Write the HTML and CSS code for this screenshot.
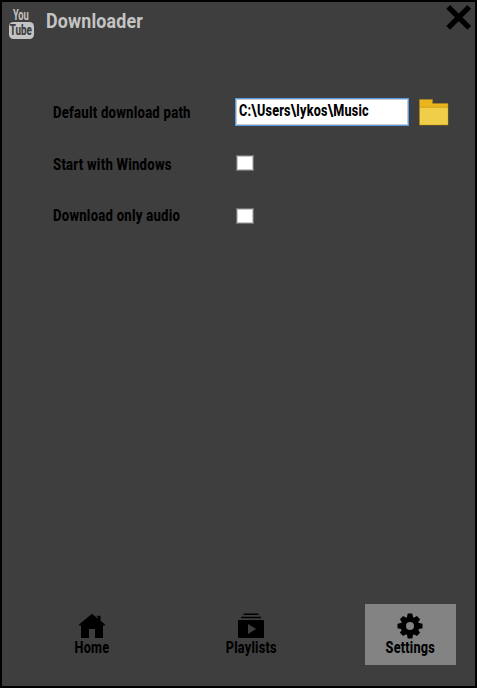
FILE: index.html
```html
<!DOCTYPE html>
<html lang="en">
<head>
<meta charset="utf-8">
<title>Downloader</title>
<link rel="stylesheet" href="styles.css">
</head>
<body>
<div class="window">
  <header class="titlebar">
    <div class="logo"><span class="logo-you"><span class="squeeze">You</span></span><span class="logo-tube"><span class="squeeze">Tube</span></span></div>
    <h1 class="title">Downloader</h1>
    <svg class="close" width="26" height="26" viewBox="0 0 26 26"><path d="M2.2 1.9L23.2 22.9M23.2 1.9L2.2 22.9" stroke="#000" stroke-width="5.4"/></svg>
  </header>
  <main class="settings">
    <div class="row">
      <span class="label"><span class="text">Default download path</span></span>
      <div class="path"><span class="text">C:\Users\lykos\Music</span></div>
      <svg class="folder" width="30" height="27" viewBox="0 0 30 27">
        <path d="M.5 .5H13.5V4.5H29V26H.5Z" fill="#ebb51c" stroke="#b58d1c" stroke-width=".5"/>
        <path d="M1 8.5H28.7V25.5H1Z" fill="#efce4a"/><path d="M1 8.2H28.7" stroke="#c79a1d" stroke-width=".7"/>
      </svg>
    </div>
    <div class="row">
      <span class="label"><span class="text">Start with Windows</span></span>
      <span class="check"></span>
    </div>
    <div class="row last">
      <span class="label"><span class="text">Download only audio</span></span>
      <span class="check"></span>
    </div>
  </main>
  <nav class="nav">
    <div class="tab">
      <svg width="28" height="26" viewBox="0 0 28 26"><path d="M14 .8L19.8 5.6V3.8H18.8V2.8H22.5V7.8L27 11.4V12.4H25V25H17V16H11V25H3V12.4H1V11.4Z"/></svg>
      <span class="text">Home</span>
    </div>
    <div class="tab">
      <svg width="28" height="26" viewBox="0 0 28 26"><path d="M6.5 .5H21.5V2H6.5ZM4 3.8H24V5.3H4Z"/><path fill-rule="evenodd" d="M2 7H26Q27 7 27 8V24Q27 25 26 25H2Q1 25 1 24V8Q1 7 2 7ZM11 11V21L19 16Z"/></svg>
      <span class="text">Playlists</span>
    </div>
    <div class="tab active">
      <svg width="26" height="26" viewBox="-13 -13 26 26">
        <path d="M-3.2-8L-2.3-12.5H2.3L3.2-8V8L2.3 12.5H-2.3L-3.2 8Z"/>
        <path transform="rotate(45)" d="M-3.2-8L-2.3-12H2.3L3.2-8V8L2.3 12H-2.3L-3.2 8Z"/>
        <path transform="rotate(90)" d="M-3.2-8L-2.3-12.5H2.3L3.2-8V8L2.3 12.5H-2.3L-3.2 8Z"/>
        <path transform="rotate(135)" d="M-3.2-8L-2.3-12H2.3L3.2-8V8L2.3 12H-2.3L-3.2 8Z"/>
        <circle r="9.2"/><circle r="4" fill="#838383"/>
      </svg>
      <span class="text">Settings</span>
    </div>
  </nav>
</div>
</body>
</html>
```
FILE: styles.css
```css
* { box-sizing: border-box; }
body { margin: 0; background: #000; }
.window {
  width: 477px;
  height: 688px;
  border: 2px solid #000;
  background: #3e3e3e;
  display: flex;
  flex-direction: column;
  font-family: Roboto, "Liberation Sans", sans-serif;
  font-weight: 800;
  color: #000;
}
.titlebar { display: flex; height: 48px; align-items: flex-start; padding: 0 3px 0 6px; }
.logo {
  width: 26px;
  margin-top: 6px;
  flex: none;
  display: flex;
  flex-direction: column;
  align-items: center;
  color: #c4c4c4;
}
.logo-you { height: 14px; font-size: 15px; font-weight: 700; line-height: 14px; }
.logo-tube {
  width: 25px;
  height: 17px;
  border-radius: 4.5px;
  background: #c4c4c4;
  color: #3e3e3e;
  font-size: 14px;
  line-height: 17px;
  display: flex;
  justify-content: center;
}
.squeeze { display: inline-block; transform: scaleX(.62); }
.logo-tube .squeeze { transform: scaleX(.7); }
.title {
  margin: 7px auto 0 12px;
  font-size: 21px;
  font-weight: 700;
  line-height: 24px;
  letter-spacing: .2px;
  color: #c4c4c4;
  transform: scaleX(.85);
  transform-origin: left;
}
.close { margin-top: 3px; }
.settings { padding: 36px 0 0 51px; flex: 1; }
.row { display: flex; align-items: center; height: 52px; }
.last .label { margin-top: -2px; }
.label { width: 182px; }
.text {
  display: inline-block;
  font-size: 16px;
  line-height: 18px;
  letter-spacing: .3px;
  white-space: nowrap;
  transform: scaleX(.82);
  transform-origin: left;
}
.path {
  width: 174px;
  height: 28px;
  background: #fff;
  border: 1px solid #569de5;
  box-shadow: inset 0 0 0 1px #c5c9cf;
  padding: 2px 0 0 3px;
}
.path .text { transform: scaleX(.785); }
.folder { margin-left: 10px; }
.check { width: 18px; height: 16px; margin-left: 1px; margin-top: -3px; background: #fff; border: 1px solid #707070; box-shadow: inset 0 0 0 1px #c8c8c8; }
.last .check { margin-top: -1px; }
.nav { display: flex; justify-content: space-between; padding: 0 19.5px 21px 45px; }
.tab { width: 90.5px; height: 61.5px; display: flex; flex-direction: column; align-items: center; padding-top: 9.5px; }
.tab .text { transform: scaleX(.79); transform-origin: center; }
.tab svg { flex: none; }
.active { background: #838383; }
```
